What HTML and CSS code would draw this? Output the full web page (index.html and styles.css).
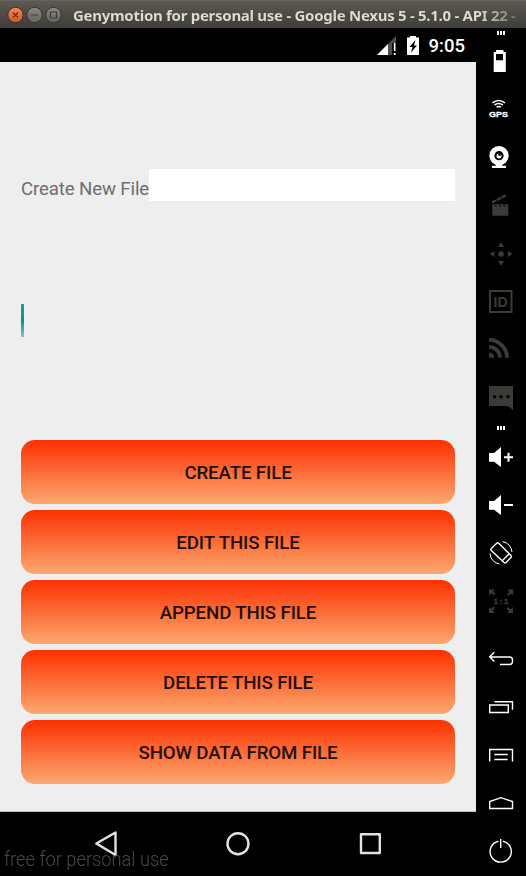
FILE: index.html
```html
<!DOCTYPE html>
<html lang="en">
<head>
<meta charset="utf-8">
<title>Genymotion for personal use</title>
<link rel="stylesheet" href="styles.css">
</head>
<body>
<header class="titlebar">
  <svg class="controls" width="58" height="28" viewBox="0 0 58 28">
    <defs>
      <linearGradient id="red" x2="0" y2="1"><stop stop-color="#f48460"/><stop offset="1" stop-color="#e2501e"/></linearGradient>
      <linearGradient id="grey" x2="0" y2="1"><stop stop-color="#8a8880"/><stop offset="1" stop-color="#64635d"/></linearGradient>
    </defs>
    <g stroke="#35342f" stroke-width="1">
      <circle cx="8.5" cy="14" r="7.7" fill="url(#red)"/>
      <circle cx="27.5" cy="14" r="7.7" fill="url(#grey)"/>
      <circle cx="46.5" cy="14" r="7.7" fill="url(#grey)"/>
    </g>
    <path d="M6 11.500l5 5m0-5l-5 5M24 14h7M43.500 11h6v6h-6z" fill="none" stroke="#3c3b37" stroke-width="1.2"/>
  </svg>
  <span class="title">Genymotion for personal use - Google Nexus 5 - 5.1.0 - API 22 -</span>
</header>
<div class="emulator">
  <section class="device">
    <div class="status">
      <svg width="44" height="22" viewBox="0 0 44 22">
        <path d="M19 2v7h-4v12H0z" fill="#4d4d4d"/>
        <path d="M11 10v11H0z" fill="#fff"/>
        <path d="M16.800 9h1.700v8h-1.700zm0 10h1.700v2h-1.700z" fill="#fff"/>
        <path d="M30 3.500h3V2h6v1.500h3V21H30z" fill="#fff"/>
        <path d="M38.500 6l-6 7h3l-1.500 5.500 6-7h-3z" fill="#000"/>
      </svg>
      <span class="clock">9:05</span>
    </div>
    <main class="screen">
      <div class="name-row"><span class="label">Create New File</span><span class="field"></span></div>
      <div class="editor"><span class="caret"></span></div>
      <div class="buttons">
        <button class="button">CREATE FILE</button>
        <button class="button">EDIT THIS FILE</button>
        <button class="button">APPEND THIS FILE</button>
        <button class="button">DELETE THIS FILE</button>
        <button class="button">SHOW DATA FROM FILE</button>
      </div>
    </main>
    <nav class="navbar">
      <svg width="476" height="64" viewBox="0 0 476 64" fill="none" stroke="#e2e2e2" stroke-width="2.4" stroke-linejoin="round">
        <path d="M115.500 20.500v22.500L96.300 31.500z"/>
        <circle cx="238" cy="31.700" r="10.500"/>
        <rect x="361" y="22.200" width="18.800" height="18.800"/>
      </svg>
      <span class="watermark">free for personal use</span>
    </nav>
  </section>
  <aside class="tools">
    <svg class="grip" height="9" viewBox="0 0 50 9"><path d="M21 3h2v4h-2zm3 0h2v4h-2zm3 0h2v4h-2z"/></svg>
    <svg class="tool" viewBox="0 0 50 48"><path fill-rule="evenodd" d="M17.700 15H20v-2h7.500v2h2.300v20H17.700zM20 17v6.300h7V17z"/></svg>
    <svg class="tool" viewBox="0 0 50 48">
      <g fill="none" stroke="#fff" stroke-width="1.600"><path d="M16.500 17.800q6.200-4.700 12.400 0M18.500 20q4.200-3 8.400 0M20.500 22.200q2.200-1.500 4.400 0"/></g>
      <text x="13" y="31.700" font-size="8" textLength="19" lengthAdjust="spacingAndGlyphs" stroke="#fff" stroke-width=".3">GPS</text>
    </svg>
    <svg class="tool" viewBox="0 0 50 48"><circle cx="23" cy="22.700" r="9.700"/><circle cx="23" cy="22.700" r="4.600" fill="#000"/><circle cx="23" cy="23" r="2.500"/><path d="M22.300 20.300h2.500v2.500h-2.500z" fill="#000"/><path d="M20 31h6v1.700h4V35H16v-2.300h4z"/></svg>
    <svg class="tool off" viewBox="0 0 50 48"><path d="M16.300 23.200h16v11.600h-16zM15.500 20.500L29.300 13.200l1 2.200-14 7.300z"/><path d="M18.500 24l2 2m2.500-2l2 2m2.500-2l2 2M19.500 18.300l2 1.500m3-4l2 1.500" stroke="#000" stroke-width="1"/></svg>
    <svg class="tool off" viewBox="0 0 50 48"><circle cx="25" cy="25" r="2.800"/><path d="M25 13.300l3 4.700h-6zM25 36.700l3-4.700h-6zM13.700 25l4.600-3v6zM36.700 25L32 22v6z"/></svg>
    <svg class="tool off" viewBox="0 0 50 48"><path d="M14 14h21.500v21H14z" fill="none" stroke="#3c3b37" stroke-width="2"/><text x="17.600" y="30.300" font-size="15" textLength="14" lengthAdjust="spacingAndGlyphs">ID</text></svg>
    <svg class="tool off" viewBox="0 0 50 48"><path d="M13 27.500a5.300 5.300 0 0 1 5.300 5.300H13z"/><path d="M13 21.800a11 11 0 0 1 11 11M13 14.800a18 18 0 0 1 18 18" fill="none" stroke="#3c3b37" stroke-width="3.800"/></svg>
    <svg class="tool off" viewBox="0 0 50 48"><path d="M13 13h24v24l-5.500-4H13z"/><g fill="#000"><circle cx="18.700" cy="23.700" r="1.800"/><circle cx="25" cy="23.700" r="1.800"/><circle cx="32" cy="23.700" r="1.800"/></g></svg>
    <svg class="grip" height="12" viewBox="0 0 50 12"><path d="M21 5h2v4h-2zm3 0h2v4h-2zm3 0h2v4h-2z"/></svg>
    <svg class="tool" viewBox="0 0 50 48"><path d="M13 20h5l7-6v20l-7-5.300h-5zM28 23.300h3.500v-3.500h2v3.500H37v2h-3.500v3.500h-2v-3.500H28z"/></svg>
    <svg class="tool" viewBox="0 0 50 48"><path d="M13 20h5l7-6v20l-7-5.300h-5zM28 23h9v2h-9z"/></svg>
    <svg class="tool line" viewBox="0 0 50 48"><path d="M15.300 19.500l5.400-5.200q1-1 2 0L35 26.600q1 1 0 2l-5 5q-1 1-2 0L15.300 21.500q-1-1 0-2zM26.500 31.500l6.500-6.500"/><path d="M26.500 12.500A11.500 11.500 0 0 1 36 23M14 24.500A11 11 0 0 0 23.500 35" stroke-width="1"/></svg>
    <svg class="tool off" viewBox="0 0 50 48"><path d="M13 12.500h6l-2 2 2.500 2.500-1.500 1.500-2.500-2.500-2.500 2.500zM37 12.500v6l-2-2-2.500 2.500-1.500-1.500 2.500-2.500-2.500-2.500zM13 36v-6l2 2 2.500-2.500L19 31l-2.500 2.500L19 36zM37 36h-6l2-2-2.500-2.500L32 30l2.500 2.500L37 30z"/><text x="17.500" y="27.300" font-size="8" textLength="15" stroke="#3c3b37" stroke-width=".3">1:1</text></svg>
    <svg class="tool line low" viewBox="0 0 50 48"><path d="M18.300 17.300l-4.600 4.500 4.600 4.700M14 22h19.500q3 0 3 3v1.500q0 3-3 3H24"/></svg>
    <svg class="tool line" viewBox="0 0 50 48"><path d="M13.700 22h18.600v7.500H13.700zM18.500 18.700h18v8"/></svg>
    <svg class="tool line" viewBox="0 0 50 48"><path d="M13.700 30.500v-12h22.800v12M18.300 23.500h13.400M18.300 28.500h13.400"/></svg>
    <svg class="tool line" viewBox="0 0 50 48"><path d="M13.700 29.500v-7L25 18.700l11.500 3.800v7z"/></svg>
    <svg class="tool line" viewBox="0 0 50 48"><path d="M22.500 14.200a10.600 10.600 0 1 0 4.400 0M24.700 12v9"/></svg>
  </aside>
</div>
</body>
</html>
```

FILE: styles.css
```css
* { box-sizing: border-box; }
body { margin: 0; width: 526px; height: 876px; overflow: hidden; background: #000; font-family: Roboto, sans-serif; }
svg { display: block; flex: none; }
.titlebar { display: flex; align-items: center; height: 28px; padding-left: 7px; background: linear-gradient(#5b5952, #3e3d38); border-top: 1px solid #66645c; }
.title { margin-left: 8px; font: bold 15px/26px "Noto Sans", sans-serif; white-space: nowrap; letter-spacing: -.28px; color: transparent; background: linear-gradient(90deg, #dfdbd2 0 405px, #5b5952 452px); background-clip: text; -webkit-background-clip: text; }
.emulator { display: flex; height: 848px; }
.device { width: 476px; }
.status { display: flex; justify-content: flex-end; align-items: center; height: 34px; padding-right: 11px; gap: 8px; color: #fff; }
.clock { font-size: 18.500px; line-height: 34px; font-weight: 500; padding-top: 2px; }
.screen { height: 750px; padding: 107px 21px 0; background: #eee; border-bottom: 1px solid #bbb; }
.name-row { display: flex; height: 32px; }
.label { width: 128px; font-size: 18.700px; line-height: 40px; letter-spacing: -.15px; color: #6f6f6f; white-space: nowrap; }
.field { flex: 1; background: #fff; }
.editor { height: 239px; padding-top: 103px; }
.caret { display: block; width: 2.500px; height: 33px; background: linear-gradient(#2a9d91, #009688 50%, #80c9c1); }
.buttons { display: flex; flex-direction: column; gap: 6px; }
.button { height: 64px; padding: 2px 0 0; border: 0; border-radius: 14px; background: linear-gradient(#fc3000, #fba970); color: #24100a; font: 500 18.700px Roboto, sans-serif; letter-spacing: -.13px; }
.navbar { position: relative; height: 64px; }
.watermark { position: absolute; left: 4px; top: 34px; font-size: 21px; line-height: 26px; font-weight: 300; color: #484848; white-space: nowrap; transform: scaleX(.87); transform-origin: left; }
.tools { width: 50px; fill: #fff; }
.grip { width: 50px; }
.tool { width: 50px; height: 48px; font: bold 8px "Liberation Sans", sans-serif; }
.off { fill: #3c3b37; }
.line { fill: none; stroke: #fff; stroke-width: 1.400; }
.low { margin-top: 10px; }
```
